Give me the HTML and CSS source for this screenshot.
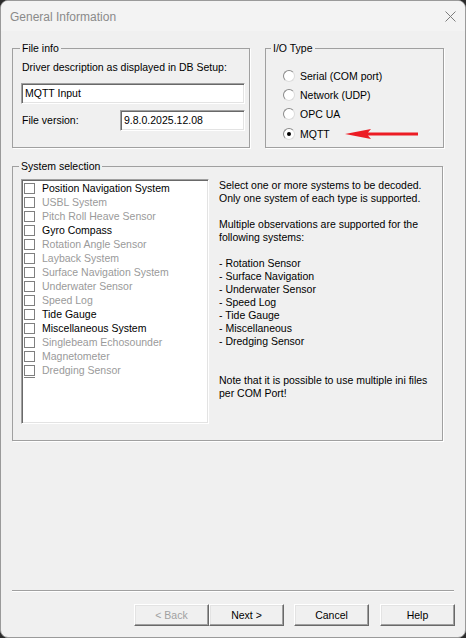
FILE: index.html
```html
<!DOCTYPE html>
<html lang="en">
<head>
<meta charset="utf-8">
<title>General Information</title>
<link rel="stylesheet" href="styles.css">
</head>
<body>
<div class="window">
  <header class="titlebar">
    <span class="title">General Information</span>
    <svg class="close" width="11" height="11" viewBox="0 0 11 11" aria-label="Close">
      <path d="M0.5 0.5L10.5 10.5M10.5 0.5L0.5 10.5" stroke="#7c7c7c" stroke-width="1" fill="none"/>
    </svg>
  </header>

  <main class="dialog">
    <div class="top-row">
      <fieldset class="group file-info">
        <legend>File info</legend>
        <div class="file-body">
          <div class="label desc">Driver description as displayed in DB Setup:</div>
          <div class="textbox wide">MQTT Input</div>
          <div class="field-row">
            <span class="label version">File version:</span>
            <div class="textbox short">9.8.0.2025.12.08</div>
          </div>
        </div>
      </fieldset>

      <fieldset class="group io-type">
        <legend>I/O Type</legend>
        <div class="radios">
          <div class="radio"><span class="radio-dot"></span>Serial (COM port)</div>
          <div class="radio"><span class="radio-dot"></span>Network (UDP)</div>
          <div class="radio"><span class="radio-dot"></span>OPC UA</div>
          <div class="radio checked"><span class="radio-dot"></span>MQTT
            <svg class="pointer" width="73" height="12" viewBox="0 0 73 12">
              <polygon points="0,6 26,1 23,4.5 73,4.5 73,7.5 23,7.5 26,11" fill="#ec1c24"/>
            </svg>
          </div>
        </div>
      </fieldset>
    </div>

    <fieldset class="group system">
      <legend>System selection</legend>
      <div class="system-body">
        <ul class="listbox">
          <li class="item"><span class="check"></span>Position Navigation System</li>
          <li class="item off"><span class="check"></span>USBL System</li>
          <li class="item off"><span class="check"></span>Pitch Roll Heave Sensor</li>
          <li class="item"><span class="check"></span>Gyro Compass</li>
          <li class="item off"><span class="check"></span>Rotation Angle Sensor</li>
          <li class="item off"><span class="check"></span>Layback System</li>
          <li class="item off"><span class="check"></span>Surface Navigation System</li>
          <li class="item off"><span class="check"></span>Underwater Sensor</li>
          <li class="item off"><span class="check"></span>Speed Log</li>
          <li class="item"><span class="check"></span>Tide Gauge</li>
          <li class="item"><span class="check"></span>Miscellaneous System</li>
          <li class="item off"><span class="check"></span>Singlebeam Echosounder</li>
          <li class="item off"><span class="check"></span>Magnetometer</li>
          <li class="item off"><span class="check"></span>Dredging Sensor</li>
          <li class="item peek" aria-hidden="true"><span class="check"></span></li>
        </ul>
        <div class="help">
          <p>Select one or more systems to be decoded.<br>Only one system of each type is supported.</p>
          <p>Multiple observations are supported for the<br>following systems:</p>
          <p>- Rotation Sensor<br>- Surface Navigation<br>- Underwater Sensor<br>- Speed Log<br>- Tide Gauge<br>- Miscellaneous<br>- Dredging Sensor</p>
          <p class="note">Note that it is possible to use multiple ini files<br>per COM Port!</p>
        </div>
      </div>
    </fieldset>

    <hr class="separator">

    <div class="buttons">
      <button class="btn" disabled>&lt; Back</button>
      <button class="btn">Next &gt;</button>
      <button class="btn cancel">Cancel</button>
      <button class="btn help-btn">Help</button>
    </div>
  </main>
</div>
</body>
</html>
```

FILE: styles.css
```css
html, body {
  margin: 0;
  padding: 0;
}

body {
  background: #2b2b2b;
  font-family: "Liberation Sans", Arial, sans-serif;
  font-size: 10.5px;
  color: #000;
}

.window {
  width: 466px;
  height: 638px;
  box-sizing: border-box;
  border: 1px solid #9a9a9a;
  border-radius: 8px;
  background: #f0f0f0;
  overflow: hidden;
  display: flex;
  flex-direction: column;
}

/* title bar */
.titlebar {
  height: 30px;
  flex: none;
  background: #f3f3f3;
  display: flex;
  align-items: center;
  justify-content: space-between;
  padding: 0 9px 0 9px;
}

.title {
  font-size: 12px;
  color: #8a8a8a;
  margin-top: 1px;
}

.close {
  display: block;
}

/* dialog body */
.dialog {
  padding: 11px 10px 0 11px;
  display: flex;
  flex-direction: column;
}

.top-row {
  display: flex;
  gap: 15px;
  height: 106px;
}

fieldset.group {
  margin: 0;
  padding: 0;
  min-width: 0;
  box-sizing: border-box;
  border: 1px solid #a0a0a0;
  box-shadow: 1px 1px 0 #fff;
}

fieldset.group legend {
  padding: 0 2px;
  line-height: 12px;
  font-size: 10.5px;
}

fieldset.file-info {
  width: 238px;
  height: 106px;
}

fieldset.file-info legend { margin-left: 7px; }

.file-body {
  padding: 7px 0 0 8px;
}

.label {
  line-height: 13px;
  white-space: nowrap;
}

.label.desc {
  margin-left: 1px;
}

.textbox {
  box-sizing: border-box;
  height: 21px;
  background: #fff;
  border: 1px solid;
  border-color: #a0a0a0 #fff #fff #a0a0a0;
  box-shadow: inset 1px 1px 0 #696969, inset -1px -1px 0 #e3e3e3;
  padding: 0 0 0 3px;
  line-height: 19px;
  white-space: nowrap;
}

.textbox.wide {
  margin-top: 9px;
  width: 224px;
}

.field-row {
  margin-top: 6px;
  display: flex;
  align-items: center;
}

.label.version {
  width: 98px;
  margin-left: 1px;
}

.textbox.short {
  width: 125px;
}

/* I/O type radios */
fieldset.io-type {
  width: 179px;
  height: 106px;
}

fieldset.io-type legend { margin-left: 5px; }

.radios {
  padding: 12px 0 0 17px;
}

.radio {
  position: relative;
  height: 19.4px;
  display: flex;
  align-items: center;
  white-space: nowrap;
}

.radio-dot {
  width: 12px;
  height: 12px;
  box-sizing: border-box;
  border-radius: 50%;
  border: 1px solid;
  border-color: #8a8a8a #dcdcdc #dcdcdc #8a8a8a;
  background: #fff;
  margin-right: 5px;
  flex: none;
  position: relative;
}

.radio.checked .radio-dot::after {
  content: "";
  position: absolute;
  left: 3px;
  top: 3px;
  width: 4px;
  height: 4px;
  border-radius: 50%;
  background: #000;
}

.pointer {
  position: absolute;
  left: 62px;
  top: 4px;
}

/* system selection */
fieldset.system {
  margin-top: 12px;
  width: 431px;
  height: 281px;
}

fieldset.system legend { margin-left: 6px; }

.system-body {
  display: flex;
  gap: 10px;
  padding: 7px 0 0 8px;
}

.listbox {
  list-style: none;
  margin: 0;
  box-sizing: border-box;
  width: 188px;
  height: 245px;
  flex: none;
  background: #fff;
  border: 1px solid;
  border-color: #a0a0a0 #fff #fff #a0a0a0;
  box-shadow: inset 1px 1px 0 #696969, inset -1px -1px 0 #e3e3e3;
  padding: 1px 0 0 2px;
  overflow: hidden;
}

.item {
  height: 14px;
  display: flex;
  align-items: center;
  white-space: nowrap;
  line-height: 14px;
}

.item.off {
  color: #9a9a9a;
}

.item.peek {
  height: 1px;
  overflow: hidden;
  align-items: flex-start;
}

.check {
  width: 11px;
  height: 11px;
  box-sizing: border-box;
  border: 1px solid #7f7f7f;
  background: #fff;
  margin-right: 7px;
  flex: none;
}

.help {
  white-space: nowrap;
  line-height: 13px;
}

.help p {
  margin: 0 0 13px 0;
}

.help p.note {
  margin-top: 26px;
}

/* bottom */
.separator {
  margin: 149px 0 0 0;
  width: 442px;
  height: 0;
  border: 0;
  border-top: 1px solid #a0a0a0;
  border-bottom: 1px solid #fff;
}

.buttons {
  margin-top: 12px;
  display: flex;
  justify-content: flex-end;
}

.btn {
  width: 75px;
  height: 22px;
  box-sizing: border-box;
  margin: 0;
  padding: 0;
  font-family: "Liberation Sans", Arial, sans-serif;
  font-size: 10.5px;
  color: #000;
  background: #f0f0f0;
  border: 1px solid;
  border-color: #fff #696969 #696969 #fff;
  box-shadow: inset -1px -1px 0 #a0a0a0, inset 1px 1px 0 #e3e3e3;
  border-radius: 0;
}

.btn:disabled {
  color: #a0a0a0;
}

.btn.cancel {
  margin-left: 10px;
}

.btn.help-btn {
  margin-left: 11px;
}
```
